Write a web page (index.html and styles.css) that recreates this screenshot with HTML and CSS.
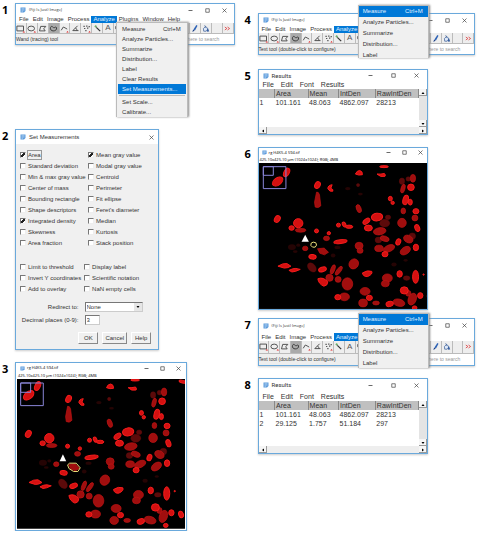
FILE: index.html
```html
<!DOCTYPE html>
<html lang="en">
<head>
  <meta charset="UTF-8" />
  <meta name="viewport" content="width=device-width, initial-scale=1.0" />
  <title>ImageJ measurement steps</title>
  <link rel="stylesheet" href="styles.css">
</head>
<body>
  <!-- shared icons and the micrograph -->
  <svg class="defs" aria-hidden="true">
    <symbol id="app" viewBox="0 0 12 12"><path d="M1 1h10v7l-3 3H1z" fill="#5c9bdc"/><path d="M3 3.5h6M3 6h6M3 8.500h3" stroke="#e4f1fd" stroke-width="1"/></symbol>
    <symbol id="min" viewBox="0 0 10 10"><path d="M1 5h8" stroke="#444" stroke-width="1.6"/></symbol>
    <symbol id="max" viewBox="0 0 10 10"><path d="M1.500 1.500h7v7h-7z" fill="none" stroke="#444" stroke-width="1.400"/></symbol>
    <symbol id="close" viewBox="0 0 10 10"><path d="M1 1l8 8M9 1l-8 8" stroke="#444" stroke-width="1.400"/></symbol>
    <symbol id="t-rect" viewBox="0 0 30 30"><path d="M3 7h22v16H3z" fill="none" stroke="#444" stroke-width="3"/><path d="M22 28l4-5 4 5z" fill="#d22"/></symbol>
    <symbol id="t-oval" viewBox="0 0 30 30"><ellipse cx="14" cy="15" rx="11" ry="8" fill="none" stroke="#444" stroke-width="3"/><path d="M22 28l4-5 4 5z" fill="#d22"/></symbol>
    <symbol id="t-poly" viewBox="0 0 30 30"><path d="M5 23l4-15h17l-7 8 5 7z" fill="none" stroke="#444" stroke-width="3"/></symbol>
    <symbol id="t-free" viewBox="0 0 30 30"><path d="M5 12c2-7 7-3 10 0s8-6 10 0c2 8-5 11-11 11S3 18 5 12z" fill="none" stroke="#333" stroke-width="3"/></symbol>
    <symbol id="t-line" viewBox="0 0 30 30"><path d="M4 21l7-11 6 3 7 4" fill="none" stroke="#444" stroke-width="3"/><path d="M21 28l4-5 4 5z" fill="#d22"/></symbol>
    <symbol id="t-angle" viewBox="0 0 30 30"><path d="M22 6L6 22h19M15 13q5 4 5 9" fill="none" stroke="#444" stroke-width="3"/></symbol>
    <symbol id="t-point" viewBox="0 0 30 30"><path d="M5 8h4M14 7h4M7 15h4M17 14h4M11 22h4M22 9h4" stroke="#444" stroke-width="4"/><path d="M21 28l4-5 4 5z" fill="#d22"/></symbol>
    <symbol id="t-wand" viewBox="0 0 30 30"><path d="M11 11l13 13" stroke="#333" stroke-width="4"/><path d="M5 8h8M9 4v8" stroke="#6a6" stroke-width="3"/></symbol>
    <symbol id="t-zoom" viewBox="0 0 30 30"><circle cx="12" cy="12" r="7" fill="none" stroke="#444" stroke-width="3"/><path d="M17 17l8 8" stroke="#444" stroke-width="3"/></symbol>
    <symbol id="t-brush" viewBox="0 0 30 30"><path d="M21 3l4 3-8 15-6-2z" fill="#2d62b5"/><path d="M10 19l6 3-8 5z" fill="#173a80"/></symbol>
    <symbol id="t-fill" viewBox="0 0 30 30"><path d="M8 15l8-7 8 9-7 7H9z" fill="#dfe9f8" stroke="#2c5290" stroke-width="2.200"/><path d="M12 4l5 10M22 16l4 8h-6z" fill="#2d62b5" stroke="#2c5290" stroke-width="2"/></symbol>
    <symbol id="t-more" viewBox="0 0 30 30"><path d="M6 10l7 5-7 5M15 10l7 5-7 5" fill="none" stroke="#d33" stroke-width="2.600"/></symbol>
    <symbol id="up" viewBox="0 0 8 8"><path d="M1 6l3-4 3 4z"/></symbol>
    <symbol id="down" viewBox="0 0 8 8"><path d="M1 2l3 4 3-4z"/></symbol>
    <symbol id="left" viewBox="0 0 8 8"><path d="M6 1L2 4l4 3z"/></symbol>
    <symbol id="right" viewBox="0 0 8 8"><path d="M2 1l4 3-4 3z"/></symbol>

    <g id="nuclei" transform="translate(-50 -72)">
      <g class="faint">
        <ellipse cx="128" cy="324" rx="12" ry="9"/><ellipse cx="147" cy="318" rx="6" ry="5"/><ellipse cx="138" cy="338" rx="7" ry="4"/>
        <ellipse cx="296" cy="143" rx="8" ry="5"/><ellipse cx="252" cy="350" rx="7" ry="6"/><ellipse cx="435" cy="378" rx="8" ry="6"/>
        <ellipse cx="265" cy="325" rx="9" ry="5"/><ellipse cx="334" cy="160" rx="7" ry="4"/><ellipse cx="470" cy="365" rx="6" ry="4"/>
      </g>
      <g class="dim">
        <ellipse cx="459" cy="120" rx="8" ry="10"/><ellipse cx="478" cy="113" rx="7" ry="7"/><ellipse cx="327" cy="132" rx="5" ry="5"/>
        <ellipse cx="407" cy="250" rx="15" ry="12"/><ellipse cx="417" cy="232" rx="8" ry="7"/>
        <ellipse cx="188" cy="387" rx="11" ry="16" transform="rotate(-40 188 387)"/>
        <ellipse cx="473" cy="420" rx="10" ry="7"/><ellipse cx="388" cy="302" rx="10" ry="9"/>
        <ellipse cx="490" cy="290" rx="10" ry="10"/>
      </g>
      <g class="mid">
        <ellipse cx="492" cy="111" rx="8" ry="12"/>
        <ellipse cx="462" cy="143" rx="6" ry="14" transform="rotate(15 462 143)"/>
        <path d="M202 154q6-2 9 8l4 34q-7 9-17 4l-2-15z"/>
        <ellipse cx="329" cy="205" rx="7" ry="13" transform="rotate(-20 329 205)"/>
        <ellipse cx="463" cy="212" rx="7" ry="9"/><ellipse cx="459" cy="249" rx="13" ry="14"/>
        <ellipse cx="498" cy="234" rx="9" ry="9"/>
        <ellipse cx="154" cy="272" rx="16" ry="6"/><ellipse cx="232" cy="297" rx="9" ry="7"/>
        <ellipse cx="392" cy="275" rx="19" ry="11" transform="rotate(-10 392 275)"/>
        <ellipse cx="407" cy="298" rx="14" ry="8" transform="rotate(20 407 298)"/>
        <ellipse cx="420" cy="328" rx="18" ry="10" transform="rotate(-25 420 328)"/>
        <ellipse cx="390" cy="328" rx="13" ry="10"/>
        <ellipse cx="478" cy="299" rx="15" ry="11" transform="rotate(30 478 299)"/>
        <ellipse cx="469" cy="335" rx="17" ry="11" transform="rotate(-35 469 335)"/>
        <ellipse cx="330" cy="320" rx="12" ry="11"/><ellipse cx="333" cy="335" rx="9" ry="8"/>
        <ellipse cx="168" cy="328" rx="8" ry="7"/>
        <ellipse cx="251" cy="393" rx="6" ry="15" transform="rotate(20 251 393)"/>
        <ellipse cx="269" cy="397" rx="6" ry="16" transform="rotate(35 269 397)"/>
        <ellipse cx="241" cy="419" rx="11" ry="11"/><ellipse cx="267" cy="424" rx="9" ry="9"/>
        <ellipse cx="295" cy="438" rx="16" ry="19"/>
        <ellipse cx="314" cy="376" rx="14" ry="16" transform="rotate(30 314 376)"/>
        <ellipse cx="415" cy="420" rx="15" ry="13"/><ellipse cx="409" cy="437" rx="12" ry="10"/>
        <ellipse cx="348" cy="461" rx="15" ry="12"/><ellipse cx="342" cy="497" rx="13" ry="12"/>
        <ellipse cx="381" cy="497" rx="10" ry="6"/><ellipse cx="478" cy="467" rx="8" ry="9"/>
        <ellipse cx="450" cy="496" rx="18" ry="11" transform="rotate(15 450 496)"/>
        <ellipse cx="490" cy="485" rx="12" ry="19" transform="rotate(20 490 485)"/>
        <ellipse cx="286" cy="478" rx="15" ry="12"/>
        <path d="M205 329l20-2 13 13-12 8-14-5z"/>
      </g>
      <g class="bright">
        <ellipse cx="85" cy="121" rx="18" ry="11" transform="rotate(-38 85 121)"/>
        <ellipse cx="112" cy="93" rx="8" ry="14" transform="rotate(25 112 93)"/>
        <ellipse cx="405" cy="75" rx="13" ry="3"/><ellipse cx="548" cy="80" rx="11" ry="4" transform="rotate(15 548 80)"/>
        <path d="M319 98q4-11 13-11 9 2 8 13-11 3-21-2zM384 98q12 1 22-2 5 5 2 9-14 4-24-7z"/>
        <ellipse cx="486" cy="139" rx="10" ry="10"/>
        <ellipse cx="205" cy="132" rx="8" ry="11" transform="rotate(25 205 132)"/>
        <path d="M249 131q-13 2-13 12 5 11 15 8 3-5-6-9z"/>
        <ellipse cx="424" cy="174" rx="6" ry="7"/><ellipse cx="431" cy="187" rx="5" ry="5"/>
        <ellipse cx="470" cy="178" rx="8" ry="15" transform="rotate(15 470 178)"/><ellipse cx="484" cy="185" rx="6" ry="9"/>
        <ellipse cx="501" cy="213" rx="9" ry="8"/>
        <ellipse cx="505" cy="265" rx="7" ry="11" transform="rotate(-20 505 265)"/>
        <ellipse cx="84" cy="237" rx="8" ry="11" transform="rotate(30 84 237)"/>
        <ellipse cx="147" cy="250" rx="14" ry="14"/><ellipse cx="127" cy="265" rx="8" ry="7"/>
        <ellipse cx="202" cy="274" rx="6" ry="6"/><ellipse cx="239" cy="281" rx="5" ry="5"/>
        <ellipse cx="274" cy="307" rx="20" ry="6" transform="rotate(-8 274 307)"/>
        <ellipse cx="268" cy="256" rx="6" ry="6"/><ellipse cx="285" cy="254" rx="5" ry="8" transform="rotate(-25 285 254)"/><ellipse cx="300" cy="261" rx="11" ry="5"/>
        <ellipse cx="384" cy="231" rx="17" ry="12" transform="rotate(-8 384 231)"/>
        <ellipse cx="352" cy="244" rx="12" ry="7" transform="rotate(-40 352 244)"/>
        <ellipse cx="358" cy="265" rx="12" ry="9"/>
        <ellipse cx="448" cy="308" rx="7" ry="10" transform="rotate(20 448 308)"/>
        <ellipse cx="408" cy="346" rx="9" ry="8"/><ellipse cx="501" cy="325" rx="8" ry="10"/>
        <ellipse cx="190" cy="354" rx="11" ry="7" transform="rotate(10 190 354)"/>
        <path d="M86 383q15-10 27-8l12 8q-9 6-20 6zM119 396q13-7 21-6l13 3q-16 8-25 8z"/>
        <ellipse cx="220" cy="393" rx="12" ry="7" transform="rotate(-20 220 393)"/>
        <path d="M206 422q17-7 30 10-1 12-12 13-16-7-18-23zM340 404q15-10 28-5 4 9-12 16-13 2-16-11z"/>
        <ellipse cx="452" cy="407" rx="8" ry="10"/><ellipse cx="500" cy="416" rx="9" ry="20"/>
        <ellipse cx="524" cy="409" rx="2" ry="2"/>
        <ellipse cx="466" cy="458" rx="12" ry="11"/><ellipse cx="361" cy="481" rx="9" ry="8"/>
        <ellipse cx="422" cy="500" rx="11" ry="8" transform="rotate(-20 422 500)"/>
        <ellipse cx="514" cy="474" rx="8" ry="9"/><ellipse cx="543" cy="479" rx="7" ry="10" transform="rotate(-20 543 479)"/>
        <ellipse cx="497" cy="512" rx="7" ry="6"/><ellipse cx="266" cy="479" rx="9" ry="8"/>
      </g>
    </g>
  </svg>

  <main class="steps">
    <div class="column">
      <section class="step step-menu">
        <span class="number">1</span>
        <div class="window imagej">
          <header class="titlebar"><svg class="logo"><use href="#app"/></svg><span class="title">(Fiji Is Just) ImageJ</span>
            <span class="controls"><svg><use href="#min"/></svg><svg><use href="#max"/></svg><svg><use href="#close"/></svg></span></header>
          <nav class="menubar"><button>File</button><button>Edit</button><button>Image</button><button>Process</button><button class="active">Analyze</button><button>Plugins</button><button>Window</button><button>Help</button></nav>
          <div class="toolbar">
            <button aria-label="Rectangle"><svg><use href="#t-rect"/></svg></button>
            <button aria-label="Oval"><svg><use href="#t-oval"/></svg></button>
            <button aria-label="Polygon"><svg><use href="#t-poly"/></svg></button>
            <button aria-label="Freehand" class="active"><svg><use href="#t-free"/></svg></button>
            <button aria-label="Line"><svg><use href="#t-line"/></svg></button>
            <button aria-label="Angle"><svg><use href="#t-angle"/></svg></button>
            <button aria-label="Point"><svg><use href="#t-point"/></svg></button>
            <button aria-label="Wand"><svg><use href="#t-wand"/></svg></button>
            <button aria-label="Text">A</button>
            <button aria-label="Zoom"><svg><use href="#t-zoom"/></svg></button>
            <button></button><button></button><button></button><button></button><button></button><button></button>
            <button aria-label="Brush"><svg><use href="#t-brush"/></svg></button>
            <button aria-label="Fill"><svg><use href="#t-fill"/></svg></button>
            <button></button>
            <button aria-label="More tools"><svg><use href="#t-more"/></svg></button>
          </div>
          <div class="status"><span>Wand (tracing) tool</span><input class="search" aria-label="Search" placeholder="k here to search"></div>
          <div class="popup">
            <button>Measure<span>Ctrl+M</span></button>
            <button>Analyze Particles...</button>
            <button>Summarize</button>
            <button>Distribution...</button>
            <button>Label</button>
            <button>Clear Results</button>
            <button class="active">Set Measurements...</button>
            <hr>
            <button>Set Scale...</button>
            <button>Calibrate...</button>
          </div>
        </div>
      </section>

      <section class="step">
        <span class="number">2</span>
        <form class="window dialog">
          <header class="titlebar"><svg class="logo"><use href="#app"/></svg><span class="title">Set Measurements</span>
            <span class="controls"><svg><use href="#close"/></svg></span></header>
          <div class="checks">
            <label class="focused"><input type="checkbox" checked><span>Area</span></label>
            <label><input type="checkbox" checked><span>Mean gray value</span></label>
            <label><input type="checkbox"><span>Standard deviation</span></label>
            <label><input type="checkbox"><span>Modal gray value</span></label>
            <label><input type="checkbox"><span>Min &amp; max gray value</span></label>
            <label><input type="checkbox"><span>Centroid</span></label>
            <label><input type="checkbox"><span>Center of mass</span></label>
            <label><input type="checkbox"><span>Perimeter</span></label>
            <label><input type="checkbox"><span>Bounding rectangle</span></label>
            <label><input type="checkbox"><span>Fit ellipse</span></label>
            <label><input type="checkbox"><span>Shape descriptors</span></label>
            <label><input type="checkbox"><span>Feret's diameter</span></label>
            <label><input type="checkbox" checked><span>Integrated density</span></label>
            <label><input type="checkbox"><span>Median</span></label>
            <label><input type="checkbox"><span>Skewness</span></label>
            <label><input type="checkbox"><span>Kurtosis</span></label>
            <label><input type="checkbox"><span>Area fraction</span></label>
            <label><input type="checkbox"><span>Stack position</span></label>
          </div>
          <div class="checks options">
            <label><input type="checkbox"><span>Limit to threshold</span></label>
            <label><input type="checkbox"><span>Display label</span></label>
            <label><input type="checkbox"><span>Invert Y coordinates</span></label>
            <label><input type="checkbox"><span>Scientific notation</span></label>
            <label><input type="checkbox"><span>Add to overlay</span></label>
            <label><input type="checkbox"><span>NaN empty cells</span></label>
          </div>
          <div class="fields">
            <label for="redirect">Redirect to:</label>
            <div class="select"><select id="redirect"><option>None</option></select><svg><use href="#down"/></svg></div>
            <label for="places">Decimal places (0-9):</label>
            <input id="places" type="text" value="3">
          </div>
          <div class="buttons"><button type="button">OK</button><button type="button">Cancel</button><button type="button">Help</button></div>
        </form>
      </section>

      <section class="step">
        <span class="number">3</span>
        <div class="window micrograph framed">
          <header class="titlebar"><svg class="logo"><use href="#app"/></svg><span class="title">rg H4K5-4 594.tif</span>
            <span class="controls"><svg><use href="#min"/></svg><svg><use href="#max"/></svg><svg><use href="#close"/></svg></span></header>
          <p class="info">425.10x425.10 µm (1024x1024); RGB; 4MB</p>
          <svg class="image" viewBox="0 0 505 450" role="img" aria-label="Red stained nuclei, one outlined">
            <rect width="505" height="450"/>
            <use href="#nuclei"/>
            <path class="inset" d="M11 12h68v68H11zM11 12h30v28H11z"/>
            <path class="roi" d="M152 258l6-5h20l12 14-7 11h-13l-14-9z"/>
            <path class="arrow" d="M138 226l10 21h-20z"/>
          </svg>
        </div>
      </section>
    </div>

    <div class="column right">
      <section class="step loose">
        <span class="number">4</span>
        <div class="window imagej">
          <header class="titlebar"><svg class="logo"><use href="#app"/></svg><span class="title">(Fiji Is Just) ImageJ</span>
            <span class="controls"><svg><use href="#min"/></svg><svg><use href="#max"/></svg><svg><use href="#close"/></svg></span></header>
          <nav class="menubar"><button>File</button><button>Edit</button><button>Image</button><button>Process</button><button class="active">Analyze</button></nav>
          <div class="toolbar">
            <button aria-label="Rectangle"><svg><use href="#t-rect"/></svg></button>
            <button aria-label="Oval"><svg><use href="#t-oval"/></svg></button>
            <button aria-label="Polygon"><svg><use href="#t-poly"/></svg></button>
            <button aria-label="Freehand" class="active"><svg><use href="#t-free"/></svg></button>
            <button aria-label="Line"><svg><use href="#t-line"/></svg></button>
            <button aria-label="Angle"><svg><use href="#t-angle"/></svg></button>
            <button aria-label="Point"><svg><use href="#t-point"/></svg></button>
            <button aria-label="Wand"><svg><use href="#t-wand"/></svg></button>
            <button aria-label="Text">A</button>
            <button aria-label="Zoom"><svg><use href="#t-zoom"/></svg></button>
            <button></button><button></button><button></button><button></button><button></button><button></button>
            <button aria-label="Brush"><svg><use href="#t-brush"/></svg></button>
            <button aria-label="Fill"><svg><use href="#t-fill"/></svg></button>
            <button></button>
            <button aria-label="More tools"><svg><use href="#t-more"/></svg></button>
          </div>
          <div class="status"><span>Text tool (double-click to configure)</span><input class="search" aria-label="Search" placeholder="k here to search"></div>
          <div class="popup raised">
            <button class="active">Measure<span>Ctrl+M</span></button>
            <button>Analyze Particles...</button>
            <button>Summarize</button>
            <button>Distribution...</button>
            <button>Label</button>
          </div>
        </div>
      </section>

      <section class="step">
        <span class="number">5</span>
        <div class="window results">
          <header class="titlebar"><svg class="logo"><use href="#app"/></svg><span class="title">Results</span>
            <span class="controls"><svg><use href="#min"/></svg><svg><use href="#max"/></svg><svg><use href="#close"/></svg></span></header>
          <nav class="menubar"><button>File</button><button>Edit</button><button>Font</button><button>Results</button></nav>
          <div class="sheet">
            <table>
              <thead><tr><th></th><th>Area</th><th>Mean</th><th>IntDen</th><th>RawIntDen</th></tr></thead>
              <tbody>
                <tr><td>1</td><td>101.161</td><td>48.063</td><td>4862.097</td><td>28213</td></tr>
              </tbody>
            </table>
            <div class="vscroll"><button aria-label="Up"><svg><use href="#up"/></svg></button><button aria-label="Down"><svg><use href="#down"/></svg></button></div>
          </div>
          <div class="hscroll"><button aria-label="Left"><svg><use href="#left"/></svg></button><button aria-label="Right"><svg><use href="#right"/></svg></button></div>
        </div>
      </section>

      <section class="step tight">
        <span class="number">6</span>
        <div class="window micrograph">
          <header class="titlebar"><svg class="logo"><use href="#app"/></svg><span class="title">rg H4K5-4 594.tif</span>
            <span class="controls"><svg><use href="#min"/></svg><svg><use href="#max"/></svg><svg><use href="#close"/></svg></span></header>
          <p class="info">425.10x425.10 µm (1024x1024); RGB; 4MB</p>
          <svg class="image" viewBox="0 0 507 439" role="img" aria-label="Red stained nuclei with a small background selection">
            <rect width="507" height="439"/>
            <use href="#nuclei" transform="translate(21 8) scale(1 .972)"/>
            <path class="inset" d="M13 11h68v66H13zM13 11h30v26H13z"/>
            <path class="roi" d="M157 241l6-3 8 2 2 7-4 6h-8l-5-5z"/>
            <path class="arrow" d="M139 216l11 21h-22z"/>
          </svg>
        </div>
      </section>

      <section class="step">
        <span class="number">7</span>
        <div class="window imagej tall">
          <header class="titlebar"><svg class="logo"><use href="#app"/></svg><span class="title">(Fiji Is Just) ImageJ</span>
            <span class="controls"><svg><use href="#min"/></svg><svg><use href="#max"/></svg><svg><use href="#close"/></svg></span></header>
          <nav class="menubar"><button>File</button><button>Edit</button><button>Image</button><button>Process</button><button class="active">Analyze</button></nav>
          <div class="toolbar">
            <button aria-label="Rectangle"><svg><use href="#t-rect"/></svg></button>
            <button aria-label="Oval"><svg><use href="#t-oval"/></svg></button>
            <button aria-label="Polygon"><svg><use href="#t-poly"/></svg></button>
            <button aria-label="Freehand" class="active"><svg><use href="#t-free"/></svg></button>
            <button aria-label="Line"><svg><use href="#t-line"/></svg></button>
            <button aria-label="Angle"><svg><use href="#t-angle"/></svg></button>
            <button aria-label="Point"><svg><use href="#t-point"/></svg></button>
            <button aria-label="Wand"><svg><use href="#t-wand"/></svg></button>
            <button aria-label="Text">A</button>
            <button aria-label="Zoom"><svg><use href="#t-zoom"/></svg></button>
            <button></button><button></button><button></button><button></button><button></button><button></button>
            <button aria-label="Brush"><svg><use href="#t-brush"/></svg></button>
            <button aria-label="Fill"><svg><use href="#t-fill"/></svg></button>
            <button></button>
            <button aria-label="More tools"><svg><use href="#t-more"/></svg></button>
          </div>
          <div class="status"><span>Text tool (double-click to configure)</span><input class="search" aria-label="Search" placeholder="k here to search"></div>
          <div class="popup raised">
            <button class="active">Measure<span>Ctrl+M</span></button>
            <button>Analyze Particles...</button>
            <button>Summarize</button>
            <button>Distribution...</button>
            <button>Label</button>
          </div>
        </div>
      </section>

      <section class="step">
        <span class="number">8</span>
        <div class="window results tall">
          <header class="titlebar"><svg class="logo"><use href="#app"/></svg><span class="title">Results</span>
            <span class="controls"><svg><use href="#min"/></svg><svg><use href="#max"/></svg><svg><use href="#close"/></svg></span></header>
          <nav class="menubar"><button>File</button><button>Edit</button><button>Font</button><button>Results</button></nav>
          <div class="sheet">
            <table>
              <thead><tr><th></th><th>Area</th><th>Mean</th><th>IntDen</th><th>RawIntDen</th></tr></thead>
              <tbody>
                <tr><td>1</td><td>101.161</td><td>48.063</td><td>4862.097</td><td>28213</td></tr>
                <tr><td>2</td><td>29.125</td><td>1.757</td><td>51.184</td><td>297</td></tr>
              </tbody>
            </table>
            <div class="vscroll"><button aria-label="Up"><svg><use href="#up"/></svg></button><button aria-label="Down"><svg><use href="#down"/></svg></button></div>
          </div>
          <div class="hscroll"><button aria-label="Left"><svg><use href="#left"/></svg></button><button aria-label="Right"><svg><use href="#right"/></svg></button></div>
        </div>
      </section>
    </div>
  </main>
</body>
</html>
```
FILE: styles.css
```css
* {
  box-sizing: border-box;
}
body {
  margin: 0;
  background-color: #fff;
  color: #333;
  font-family: "Liberation Sans", Arial, sans-serif;
  font-size: 6px;
  line-height: 8px;
}
button, input, select {
  margin: 0;
  padding: 0;
  border: none;
  border-radius: 0;
  background: none;
  color: inherit;
  font: inherit;
}
svg {
  display: block;
}
.defs {
  position: absolute;
  width: 0;
  height: 0;
}

/* page */
.steps {
  display: grid;
  grid-template-columns: 1fr 1fr;
}
.column {
  padding: 3px 5px 0 2px;
}
.column.right {
  padding: 13px 4px 0 5px;
}
.step {
  display: flex;
  align-items: flex-start;
  margin-bottom: 12px;
}
.column .step:last-child {
  margin-bottom: 0;
}
.step-menu {
  margin-bottom: 84px;
}
.step.tight {
  margin-bottom: 8px;
}
.step.loose {
  margin-bottom: 14px;
}
.number {
  flex: none;
  width: 13px;
  color: #000;
  font-family: "Open Sans", sans-serif;
  font-size: 11px;
  font-weight: bold;
  line-height: 14px;
}
.window {
  position: relative;
  border: 1px solid #6aa9dc;
  background-color: #fff;
  box-shadow: 0 1px 2px #ccc;
}

/* title bar */
.titlebar {
  display: flex;
  align-items: center;
  height: 12px;
  padding: 0 4px;
}
.logo {
  width: 6px;
  height: 6px;
  margin-right: 3px;
}
.title {
  flex: 1;
  white-space: nowrap;
}
.controls {
  display: flex;
  gap: 12px;
}
.controls svg {
  width: 5px;
  height: 5px;
}

/* ImageJ main window */
.imagej {
  flex: 1;
}
.imagej .titlebar {
  padding-right: 7px;
}
.imagej .title {
  font-family: "Open Sans", sans-serif;
  font-size: 4px;
}
.menubar {
  display: flex;
  height: 7px;
  padding-left: 1px;
  line-height: 7px;
}
.menubar button {
  padding: 0 2px;
}
.menubar .active,
.popup .active {
  background-color: #0078d7;
  color: #e2f1ff;
}
.toolbar {
  display: flex;
  height: 11px;
  background-color: #eee;
}
.toolbar button {
  display: flex;
  flex: 1;
  align-items: center;
  justify-content: center;
  border-right: 1px solid #bbb;
  border-bottom: 1px solid #bbb;
  color: #555;
  font-size: 8px;
}
.toolbar .active {
  background-color: #aaa;
}
.toolbar svg {
  width: 9px;
  height: 9px;
}
.status {
  display: flex;
  justify-content: space-between;
  height: 10px;
  background-color: #eee;
  font-size: 5px;
  line-height: 10px;
}
.search {
  width: 23%;
  background-color: #fff;
}
.search::placeholder {
  color: #999;
}
.popup {
  position: absolute;
  top: 18px;
  left: 46%;
  width: 33%;
  padding: 1px 1px 0;
  border: 1px solid #bbb;
  border-bottom: none;
  background-color: #f0f0f0;
  box-shadow: 1px 0 2px #888;
}
.popup button {
  display: flex;
  justify-content: space-between;
  width: 100%;
  padding: 0 5px 0 4px;
  line-height: 10px;
  white-space: nowrap;
}
.popup hr {
  height: 1px;
  margin: 1px;
  border: none;
  background-color: #bbb;
}
.popup.raised {
  top: -9px;
  padding: 0;
  overflow: hidden;
}
.popup.raised button {
  line-height: 11px;
}
.popup.raised button:last-child {
  height: 8px;
}
.imagej.tall .popup.raised {
  top: -6px;
}
.imagej.tall .popup.raised button:last-child {
  height: 10px;
}
.imagej.tall .titlebar {
  height: 14px;
}
.imagej.tall .menubar {
  height: 8px;
  line-height: 8px;
}
.imagej.tall .toolbar {
  height: 13px;
}
.imagej.tall .status {
  height: 11px;
}

/* Set Measurements dialog */
.dialog {
  width: 62%;
  padding-bottom: 1px;
  background-color: #f0f0f0;
}
.dialog .titlebar {
  height: 14px;
  background-color: #fff;
}
.checks {
  display: grid;
  grid-template-columns: 68fr 70fr;
  padding: 5px 0 0 4px;
}
.checks.options {
  grid-template-columns: 64fr 74fr;
  padding-top: 13px;
}
.checks label {
  display: flex;
  align-items: center;
  height: 11px;
  white-space: nowrap;
}
.checks input {
  appearance: none;
  flex: none;
  width: 6px;
  height: 6px;
  margin-right: 2px;
  border: 1px solid #eee;
  border-top-color: #777;
  border-left-color: #777;
  background-color: #fff;
}
.checks input:checked {
  background-image: linear-gradient(135deg, #fff 35%, #222 35%, #222 65%, #fff 65%);
}
.checks .focused span {
  outline: 1px solid #999;
}
.fields {
  display: grid;
  grid-template-columns: 62fr 73fr;
  align-items: center;
  gap: 3px 6px;
  padding-top: 8px;
}
.fields label {
  text-align: right;
  white-space: nowrap;
}
.select {
  position: relative;
  width: 80%;
}
.select select,
.fields input {
  display: block;
  width: 100%;
  height: 10px;
  padding-left: 1px;
  border: 1px solid #ccc;
  border-top-color: #777;
  border-left-color: #777;
  background-color: #fff;
  appearance: none;
}
.fields input {
  width: 15px;
}
.select svg {
  position: absolute;
  top: 1px;
  right: 1px;
  width: 8px;
  height: 8px;
  padding: 2px;
  background-color: #e6e6e6;
}
.buttons {
  display: flex;
  justify-content: flex-end;
  gap: 4px;
  padding: 7px 7px 4px 0;
}
.buttons button {
  min-width: 20px;
  height: 12px;
  padding: 0 2px;
  border: 1px solid #fff;
  border-right-color: #888;
  border-bottom-color: #888;
}

/* image windows */
.micrograph {
  width: 74%;
}
.micrograph .titlebar {
  height: 9px;
  padding: 0 4px 0 3px;
}
.micrograph .title,
.info {
  color: #000;
  font-family: "Open Sans", sans-serif;
  font-size: 4px;
}
.micrograph .logo {
  width: 5px;
  height: 5px;
  margin-right: 2px;
}
.micrograph .controls {
  gap: 11px;
}
.info {
  margin: 0;
  padding-left: 1px;
  line-height: 6px;
  white-space: nowrap;
}
.micrograph.framed {
  padding: 0 1px 1px;
}
.micrograph.framed .titlebar {
  height: 10px;
}
.image {
  width: 100%;
  height: auto;
}
.faint {
  fill: #250404;
}
.dim {
  fill: #5c0a0a;
  stroke: #6c0c0c;
}
.mid {
  fill: #a00e0e;
  stroke: #c01414;
  stroke-width: 2;
}
.bright {
  fill: #d41010;
  stroke: #f41c1c;
  stroke-width: 3;
}
.inset {
  fill: none;
  stroke: #8a86d8;
  stroke-width: 3;
}
.roi {
  fill: none;
  stroke: #e8dc78;
  stroke-width: 3;
}
.arrow {
  fill: #fff;
}

/* Results windows */
.results {
  width: 74%;
  font-size: 7px;
}
.results .title {
  font-family: Roboto, sans-serif;
  font-size: 6px;
}
.results .titlebar {
  height: 11px;
}
.results .controls {
  gap: 18px;
  padding-right: 4px;
}
.results .menubar {
  gap: 1px;
  height: 8px;
  line-height: 8px;
}
.results .menubar button {
  padding: 0 3px;
}
.sheet {
  display: flex;
  align-items: flex-start;
}
.sheet table {
  flex: 1;
  table-layout: fixed;
  border-collapse: collapse;
}
.sheet th, .sheet td {
  padding: 0 0 0 1px;
  line-height: 9px;
  text-align: left;
  font-weight: normal;
  white-space: nowrap;
}
.sheet th {
  border-right: 1px solid #888;
  background-color: #c0c0c0;
}
.sheet th:nth-child(1) {
  width: 10%;
}
.sheet th:nth-child(2) {
  width: 21%;
}
.sheet th:nth-child(3) {
  width: 19%;
}
.sheet th:nth-child(4) {
  width: 23%;
}
.vscroll {
  display: flex;
  flex-direction: column;
  justify-content: space-between;
  width: 8px;
  height: 38px;
  background-color: #e4e4e4;
}
.vscroll button,
.hscroll button {
  width: 8px;
  height: 7px;
  padding: 2px;
  border-right: 1px solid #999;
  border-bottom: 1px solid #999;
  background-color: #f6f6f6;
}
.vscroll svg,
.hscroll svg {
  width: 4px;
  height: 4px;
}
.hscroll {
  display: flex;
  justify-content: space-between;
  background-color: #eee;
}
.results.tall .titlebar {
  height: 13px;
}
.results.tall .menubar {
  height: 9px;
  line-height: 9px;
}
.results.tall .vscroll {
  height: 45px;
}
```
